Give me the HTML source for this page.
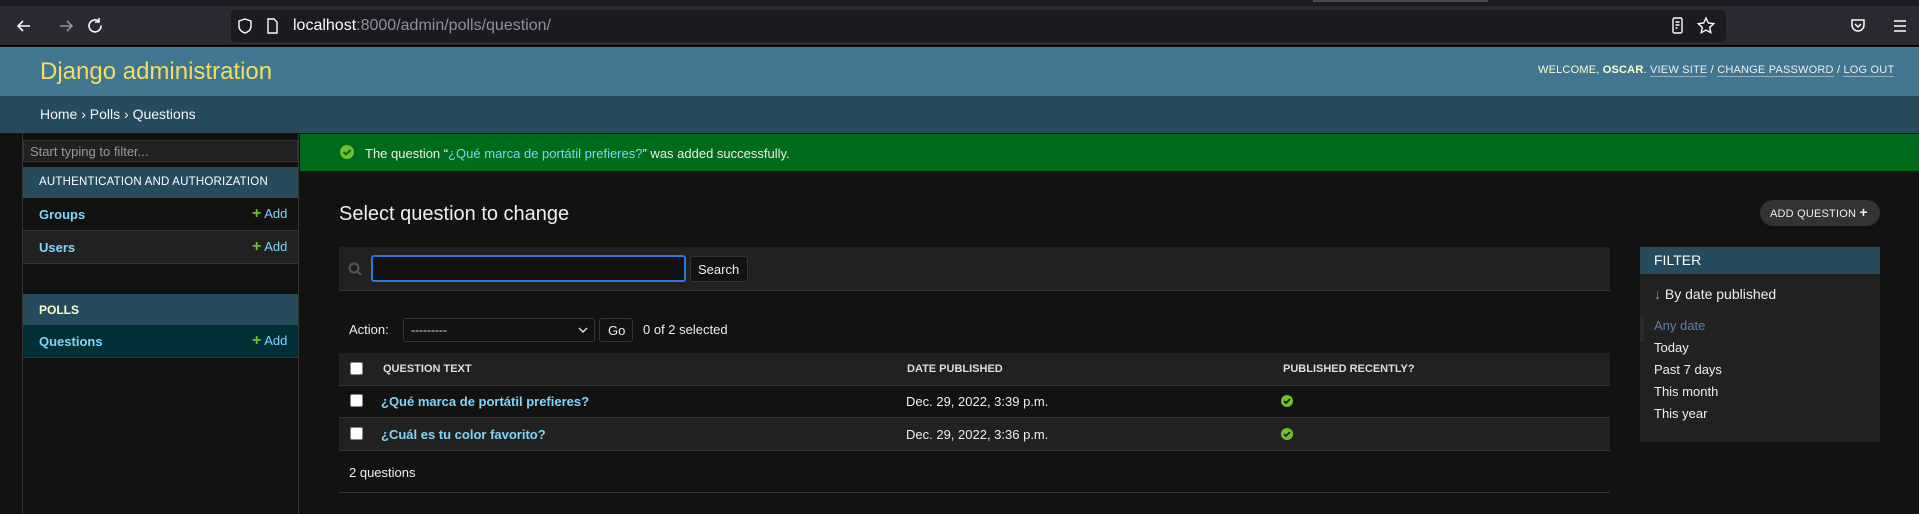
<!DOCTYPE html>
<html><head><meta charset="utf-8"><style>
*{box-sizing:border-box;margin:0;padding:0}
body{width:1919px;height:514px;overflow:hidden;background:#121212;font-family:"Liberation Sans",sans-serif;color:#eee;position:relative;font-size:13px}
.a{position:absolute;white-space:nowrap}
a{color:#81d4fa;text-decoration:none}
</style></head><body>
<div class="a" style="left:0;top:0;width:1919px;height:6px;background:#1c1b22"></div>
<div class="a" style="left:1313px;top:0;width:175px;height:2px;background:#4a4952"></div>
<div class="a" style="left:0;top:6px;width:1919px;height:40px;background:#2b2a33;border-bottom:1px solid #000"></div>
<svg class="a" style="left:14px;top:14px" width="90" height="24" fill="none" stroke-width="1.6">
<path d="M16 12H4M9 7l-5 5 5 5" stroke="#fbfbfe"/>
<path d="M58 12h-12M53 7l5 5-5 5" stroke="#8f8f9d"/>
</svg>
<svg class="a" style="left:86px;top:16px" width="20" height="20" fill="none" stroke="#fbfbfe" stroke-width="1.6"><path d="M15 9.5A6 6 0 1 1 12.5 5M13 2v4h-4"/></svg>
<div class="a" style="left:231px;top:10px;width:1495px;height:32px;background:#1c1b22;border-radius:4px"></div>
<svg class="a" style="left:238px;top:17px" width="40" height="18" fill="none" stroke="#fbfbfe" stroke-width="1.4"><path d="M7 2l6 2v5c0 4-3 6-6 7-3-1-6-3-6-7V4z"/><path d="M30 2h6l3 3v11h-9z"/></svg>
<div class="a" style="left:293px;top:17px;font-size:16px;color:#8f8f9d"><span style="color:#fbfbfe">localhost</span>:8000/admin/polls/question/</div>
<svg class="a" style="left:1671px;top:16px" width="48" height="20" fill="none" stroke="#fbfbfe" stroke-width="1.4"><rect x="2" y="2" width="9" height="15" rx="1.5"/><path d="M4.5 6h4M4.5 9h4M4.5 12h2"/><path d="M35 2l2.3 5 5.4.6-4 3.7 1.1 5.4-4.8-2.7-4.8 2.7 1.1-5.4-4-3.7 5.4-.6z"/></svg>
<svg class="a" style="left:1850px;top:16px" width="60" height="20" fill="none" stroke="#fbfbfe" stroke-width="1.5"><path d="M2 4h12v5a6 6 0 0 1-12 0z"/><path d="M5 8l3 3 3-3"/><path d="M44 5h12M44 10h12M44 15h12"/></svg>
<div class="a" style="left:0;top:47px;width:1919px;height:49px;background:#417690"></div>
<div class="a" style="left:40px;top:58px;font-size:24px;color:#f5dd5d;font-weight:300">Django administration</div>
<div class="a" style="left:1538px;top:64px;font-size:11px;color:#ffc;letter-spacing:.2px">WELCOME, <b>OSCAR</b>. <span style="border-bottom:1px solid #8fb0c0;color:#eee">VIEW SITE</span> / <span style="border-bottom:1px solid #8fb0c0;color:#eee">CHANGE PASSWORD</span> / <span style="border-bottom:1px solid #8fb0c0;color:#eee">LOG OUT</span></div>
<div class="a" style="left:0;top:96px;width:1919px;height:37px;background:#264b5d"></div>
<div class="a" style="left:40px;top:106px;font-size:14px;color:#f5f5f5">Home › Polls › Questions</div>
<div class="a" style="left:22px;top:133px;width:277px;height:381px;border-left:1px solid #353535;border-right:1px solid #353535"></div>
<div class="a" style="left:23px;top:140px;width:275px;height:22px;background:#212121;border:1px solid #353535;font-size:13px;color:#999;padding:3px 6px">Start typing to filter...</div>
<div class="a" style="left:23px;top:167px;width:275px;height:31px;background:#264b5d;color:#fff;font-size:11.5px;letter-spacing:.2px;padding:9px 16px">AUTHENTICATION AND AUTHORIZATION</div>
<div class="a" style="left:23px;top:198px;width:275px;height:33px;border-bottom:1px solid #353535;padding:9px 16px;font-weight:bold"><a>Groups</a></div>
<div class="a" style="left:23px;top:231px;width:275px;height:33px;background:#212121;border-bottom:1px solid #353535;padding:9px 16px;font-weight:bold"><a>Users</a></div>
<div class="a" style="left:23px;top:294px;width:275px;height:31px;background:#264b5d;color:#ffc;font-size:12px;font-weight:bold;padding:9px 16px">POLLS</div>
<div class="a" style="left:23px;top:325px;width:275px;height:33px;background:#003036;border-bottom:1px solid #353535;padding:9px 16px;font-weight:bold"><a>Questions</a></div>
<div class="a" style="left:252px;top:206px;color:#81d4fa"><b style="color:#70bf2b;font-size:16px;line-height:13px">+</b> Add</div>
<div class="a" style="left:252px;top:239px;color:#81d4fa"><b style="color:#70bf2b;font-size:16px;line-height:13px">+</b> Add</div>
<div class="a" style="left:252px;top:333px;color:#81d4fa"><b style="color:#70bf2b;font-size:16px;line-height:13px">+</b> Add</div>
<div class="a" style="left:300px;top:134px;width:1619px;height:37px;background:#006b1b"></div>
<svg class="a" style="left:340px;top:145px" width="14" height="14"><circle cx="7" cy="7" r="7" fill="#70bf2b"/><path d="M3.5 7l2.5 2.5 4.5-4.5" stroke="#006b1b" stroke-width="2" fill="none"/></svg>
<div class="a" style="left:365px;top:146px;color:#eee">The question “<a>¿Qué marca de portátil prefieres?</a>” was added successfully.</div>
<div class="a" style="left:339px;top:203px;font-size:20px;font-weight:300;color:#eee">Select question to change</div>
<div class="a" style="left:1760px;top:200px;width:120px;height:26px;background:#333;border-radius:13px;color:#eee;font-size:11px;letter-spacing:.2px;padding:7px 10px">ADD QUESTION <b style="font-size:14px;line-height:10px">+</b></div>
<div class="a" style="left:339px;top:247px;width:1271px;height:44px;background:#212121;border-bottom:1px solid #353535"></div>
<svg class="a" style="left:348px;top:262px" width="14" height="14" fill="none" stroke="#555" stroke-width="2"><circle cx="6" cy="6" r="4.5"/><path d="M9.5 9.5l3.5 3.5"/></svg>
<div class="a" style="left:371px;top:255px;width:315px;height:27px;background:#121212;border:2px solid #2a78d8;border-radius:3px"></div>
<div class="a" style="left:690px;top:256px;width:58px;height:26px;background:#121212;border:1px solid #353535;border-radius:3px;padding:5px 7px">Search</div>
<div class="a" style="left:349px;top:322px">Action:</div>
<div class="a" style="left:403px;top:318px;width:192px;height:24px;border:1px solid #353535;border-radius:3px;background:#121212;padding:4px 7px;font-size:12px">---------<svg style="position:absolute;right:6px;top:8px" width="10" height="7" fill="none" stroke="#ddd" stroke-width="1.5"><path d="M1 1l4 4 4-4"/></svg></div>
<div class="a" style="left:599px;top:318px;width:34px;height:24px;border:1px solid #353535;border-radius:3px;padding:4px 8px">Go</div>
<div class="a" style="left:643px;top:322px">0 of 2 selected</div>
<div class="a" style="left:339px;top:353px;width:1271px;height:33px;background:#212121;border-bottom:1px solid #353535"></div>
<div class="a" style="left:339px;top:386px;width:1271px;height:32px;background:#121212;border-bottom:1px solid #353535"></div>
<div class="a" style="left:339px;top:418px;width:1271px;height:33px;background:#212121;border-bottom:1px solid #353535"></div>
<div class="a" style="left:339px;top:492px;width:1271px;height:1px;background:#353535"></div>
<div class="a" style="left:350px;top:362px;width:13px;height:13px;background:#fff;border:1px solid #888;border-radius:2px"></div>
<div class="a" style="left:350px;top:394px;width:13px;height:13px;background:#fff;border:1px solid #888;border-radius:2px"></div>
<div class="a" style="left:350px;top:427px;width:13px;height:13px;background:#fff;border:1px solid #888;border-radius:2px"></div>
<div class="a" style="left:383px;top:363px;font-size:11px;font-weight:bold;color:#ddd">QUESTION TEXT</div>
<div class="a" style="left:907px;top:363px;font-size:11px;font-weight:bold;color:#ddd">DATE PUBLISHED</div>
<div class="a" style="left:1283px;top:363px;font-size:11px;font-weight:bold;color:#ddd">PUBLISHED RECENTLY?</div>
<div class="a" style="left:381px;top:394px;font-weight:bold"><a>¿Qué marca de portátil prefieres?</a></div>
<div class="a" style="left:381px;top:427px;font-weight:bold"><a>¿Cuál es tu color favorito?</a></div>
<div class="a" style="left:906px;top:394px">Dec. 29, 2022, 3:39 p.m.</div>
<div class="a" style="left:906px;top:427px">Dec. 29, 2022, 3:36 p.m.</div>
<svg class="a" style="left:1281px;top:395px" width="12" height="12"><circle cx="6" cy="6" r="6" fill="#70bf2b"/><path d="M3 6l2 2 4-4" stroke="#121212" stroke-width="1.8" fill="none"/></svg>
<svg class="a" style="left:1281px;top:428px" width="12" height="12"><circle cx="6" cy="6" r="6" fill="#70bf2b"/><path d="M3 6l2 2 4-4" stroke="#212121" stroke-width="1.8" fill="none"/></svg>
<div class="a" style="left:349px;top:465px">2 questions</div>
<div class="a" style="left:1640px;top:247px;width:240px;height:195px;background:#212121"></div>
<div class="a" style="left:1640px;top:247px;width:240px;height:27px;background:#264b5d;color:#fff;font-size:14px;padding:5px 14px">FILTER</div>
<div class="a" style="left:1654px;top:286px;font-size:14px;color:#eee"><span style="color:#44b8e0">↓</span> By date published</div>
<div class="a" style="left:1640px;top:316px;width:4px;height:26px;background:#2a2a2a"></div>
<div class="a" style="left:1654px;top:318px;color:#5b80b2">Any date</div>
<div class="a" style="left:1654px;top:340px">Today</div>
<div class="a" style="left:1654px;top:362px">Past 7 days</div>
<div class="a" style="left:1654px;top:384px">This month</div>
<div class="a" style="left:1654px;top:406px">This year</div>
</body></html>
